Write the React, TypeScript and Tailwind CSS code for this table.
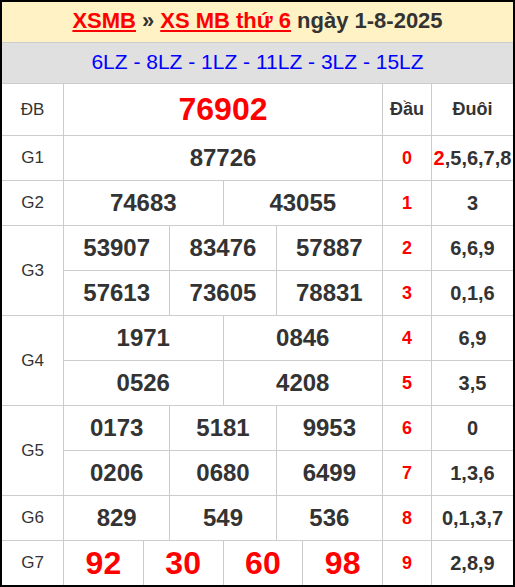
import React from "react";

type Prize = {
  label: string;
  rows: string[][];
  span: string;
  big?: boolean;
};

const prizes: Prize[] = [
  {label: "G1", rows: [["87726"]], span: "col-span-12"},
  {label: "G2", rows: [["74683", "43055"]], span: "col-span-6"},
  {label: "G3", rows: [["53907", "83476", "57887"], ["57613", "73605", "78831"]], span: "col-span-4"},
  {label: "G4", rows: [["1971", "0846"], ["0526", "4208"]], span: "col-span-6"},
  {label: "G5", rows: [["0173", "5181", "9953"], ["0206", "0680", "6499"]], span: "col-span-4"},
  {label: "G6", rows: [["829", "549", "536"]], span: "col-span-4"},
  {label: "G7", rows: [["92", "30", "60", "98"]], span: "col-span-3", big: true},
];

const duoi = ["2,5,6,7,8", "3", "6,6,9", "0,1,6", "6,9", "3,5", "0", "1,3,6", "0,1,3,7", "2,8,9"];

const cell = "bg-white flex items-center justify-center";

export default function App() {
  let dau = 0;

  const renderDau = () => {
    const d = dau++;
    const tail = duoi[d];
    return (
      <React.Fragment key={"dau" + d}>
        <div className={`${cell} text-[18px] font-bold text-[#f00]`}>{d}</div>
        <div className={`${cell} text-[20px] font-bold text-[#333] whitespace-nowrap`}>
          {d === 0 ? (
            <>
              <span className="text-[#f00]">2</span>
              {tail.slice(1)}
            </>
          ) : tail}
        </div>
      </React.Fragment>
    );
  };

  return (
    <div className="w-[515px] h-[587px] border-2 border-black bg-[#ccc] font-['Liberation_Sans',Arial,sans-serif]">
      <div className="grid grid-cols-[61px_repeat(12,minmax(0,1fr))_48px_81px] grid-rows-[40px_40px_51px_repeat(10,44px)] gap-px">
        <div className="col-span-full bg-[#fff2c4] flex items-center justify-center pb-[3px] text-[22px] font-bold text-[#333]">
          <a className="text-[#f00] underline">XSMB</a>
          <span className="mx-[6px]">»</span>
          <a className="text-[#f00] underline">XS MB thứ 6</a>
          <span className="ml-[6px]">ngày 1-8-2025</span>
        </div>
        <div className="col-span-full bg-[#e0e0e0] flex items-center justify-center pb-[2px] text-[21px] text-[#0000ff]">
          6LZ - 8LZ - 1LZ - 11LZ - 3LZ - 15LZ
        </div>

        <div className={`${cell} text-[17px] text-[#333]`}>ĐB</div>
        <div className={`${cell} col-span-12 pb-[2px] text-[32px] font-bold text-[#f00]`}>76902</div>
        <div className={`${cell} text-[18px] font-bold text-[#333]`}>Đầu</div>
        <div className={`${cell} text-[18px] font-bold text-[#333]`}>Đuôi</div>

        {prizes.map((p) => (
          <React.Fragment key={p.label}>
            <div className={`${cell} text-[17px] text-[#333] ${p.rows.length > 1 ? "row-span-2" : ""}`}>
              {p.label}
            </div>
            {p.rows.map((row, ri) => (
              <React.Fragment key={ri}>
                {row.map((n, i) => (
                  <div
                    key={i}
                    className={`${cell} ${p.span} font-bold ${p.big ? "text-[32px] text-[#f00]" : "text-[24px] text-[#333]"}`}
                  >
                    {n}
                  </div>
                ))}
                {renderDau()}
              </React.Fragment>
            ))}
          </React.Fragment>
        ))}
      </div>
    </div>
  );
}
